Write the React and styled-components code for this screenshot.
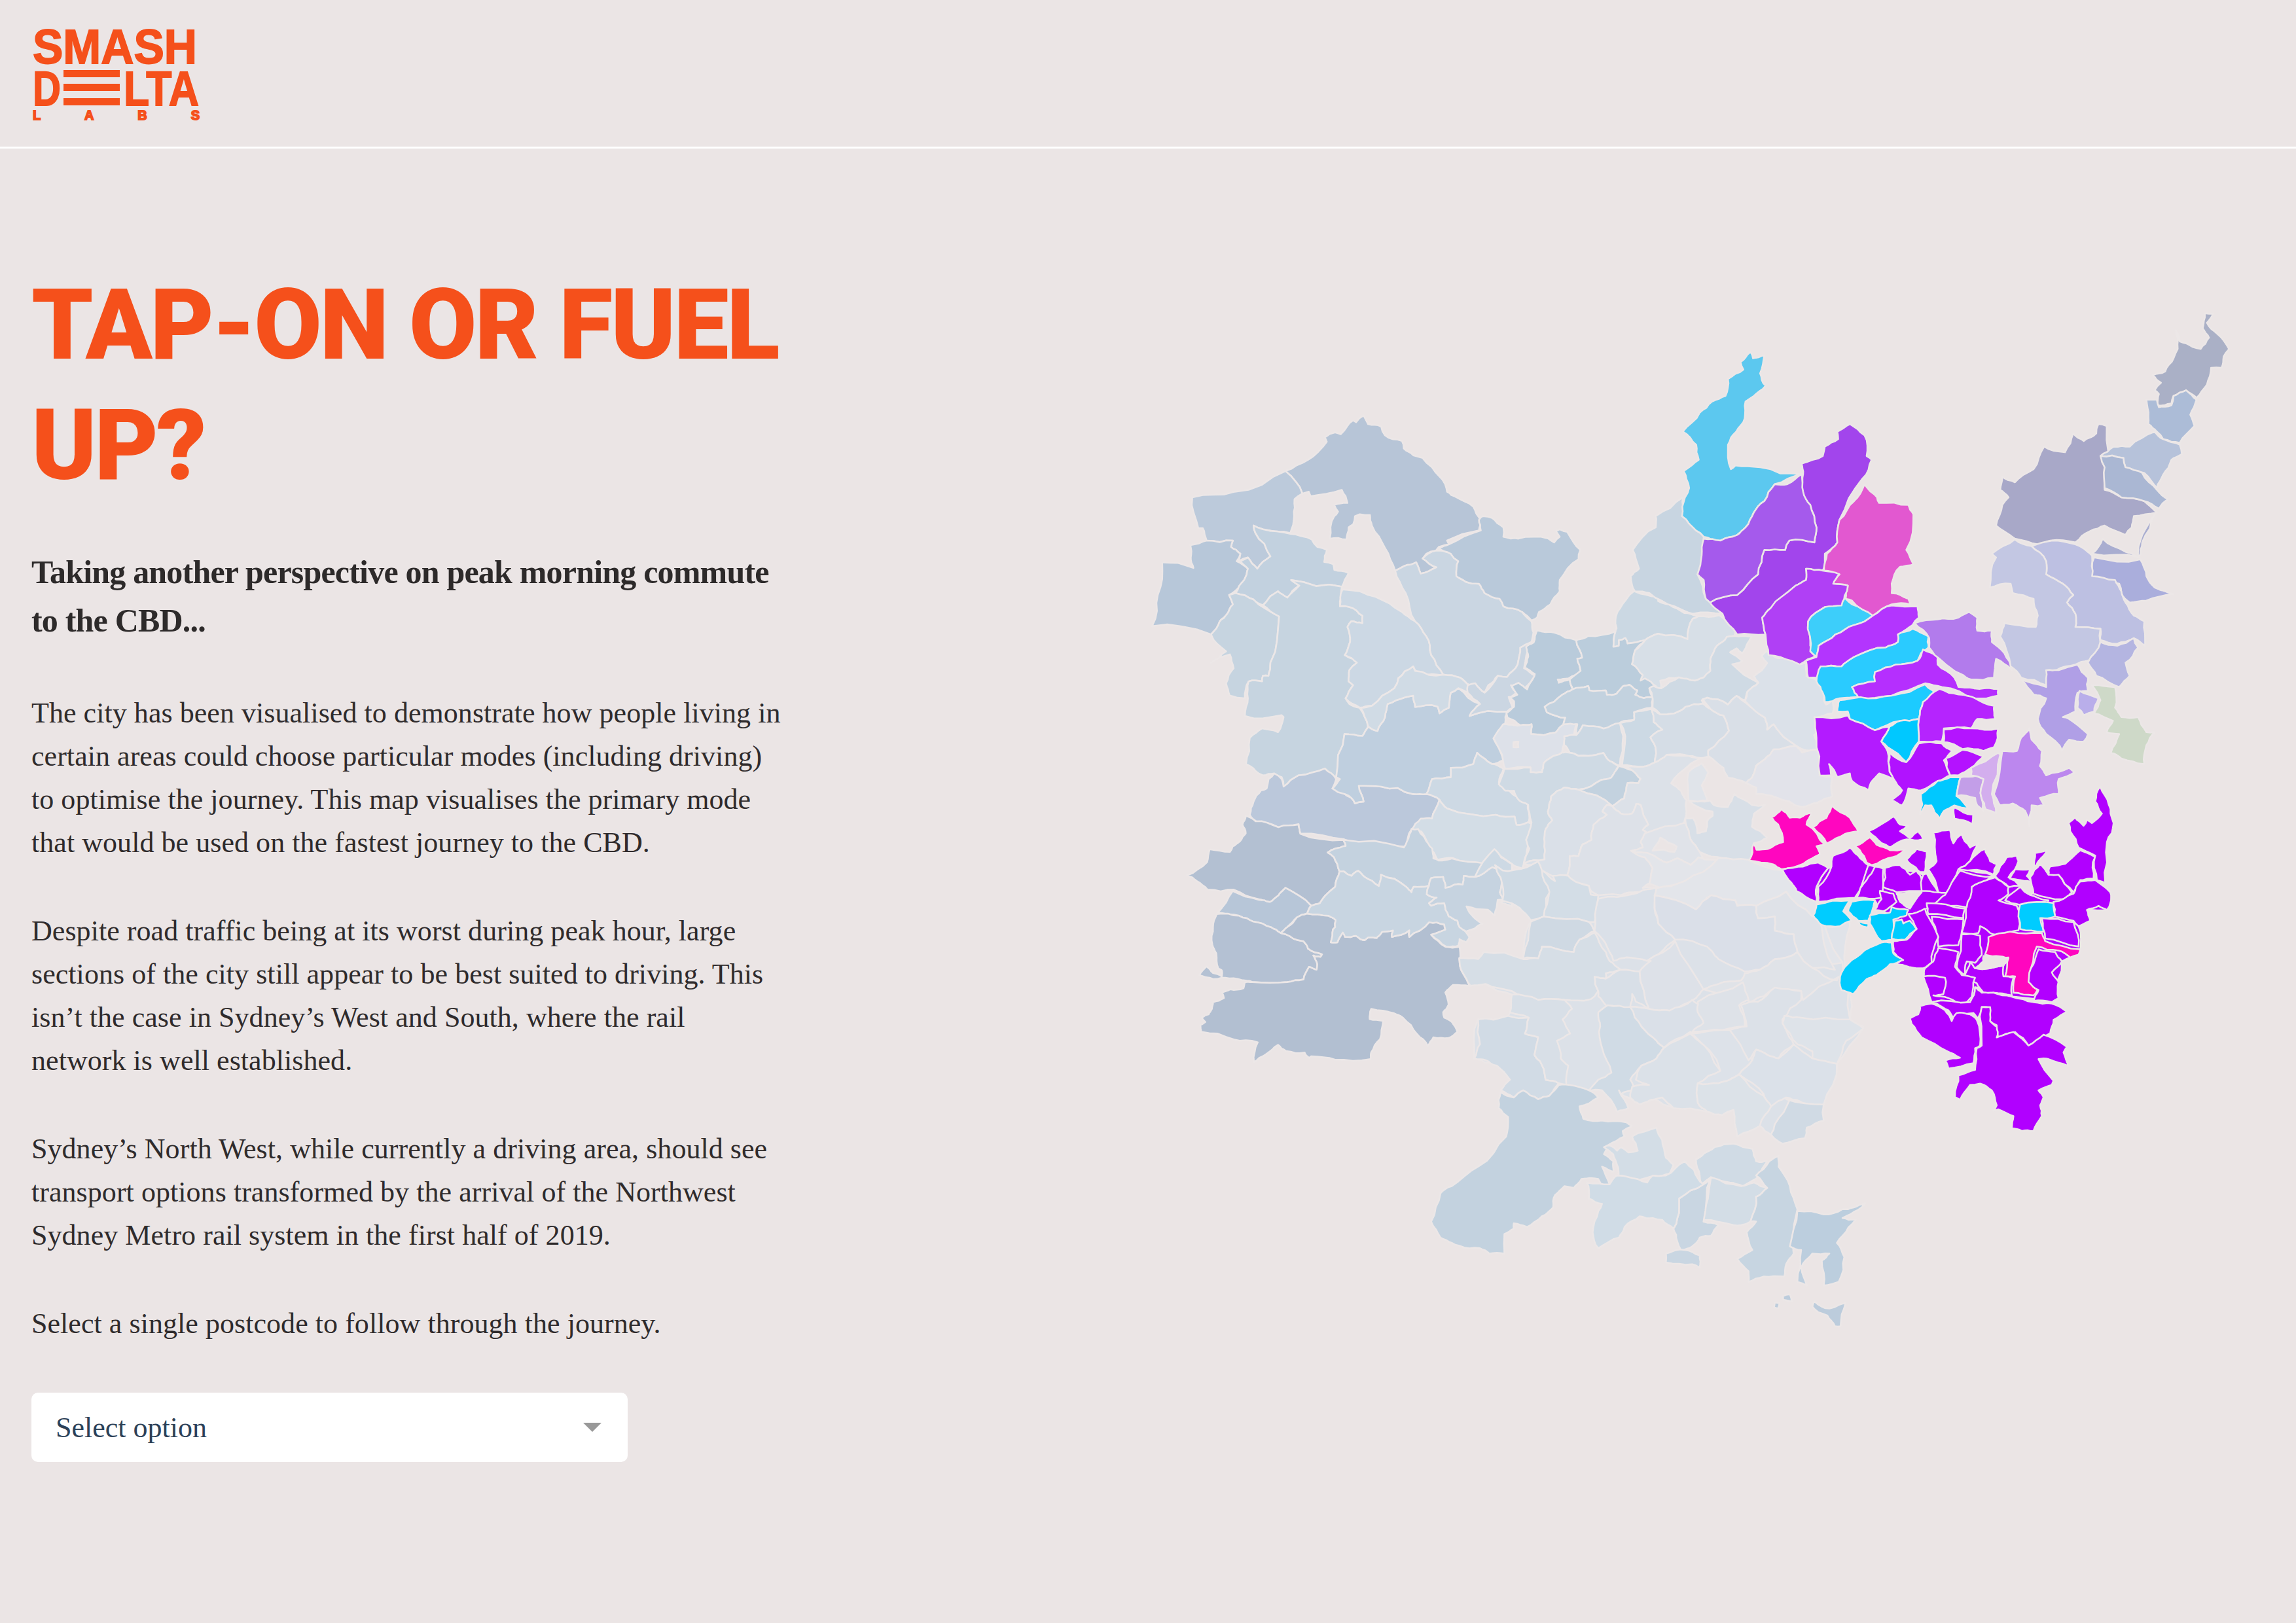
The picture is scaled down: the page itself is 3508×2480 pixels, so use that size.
import React from 'react'
import styled, {createGlobalStyle} from 'styled-components'

const GlobalStyle = createGlobalStyle`
    html, body {
        margin: 0;
        padding: 0;
        background: #ebe5e5;
    }
`
const Page = styled.div`
    width: 3508px;
    height: 2480px;
    overflow: hidden;
    background: #ebe5e5;
    color: #2f2b2c;
    font-family: "Liberation Serif", serif;
`
const Header = styled.header`
    height: 224px;
    padding: 30px 0 0 46px;
    box-sizing: border-box;
    box-shadow: 0 3px 0 #fff;
`
const Logo = styled.svg`
    display: block;
    width: 270px;
    height: 170px;
    overflow: visible;
    fill: #f5501b;
    text {
        font-family: "Liberation Sans", sans-serif;
        font-weight: 700;
        stroke: #f5501b;
        stroke-width: 1.8px;
    }
`
const Main = styled.main`
    display: flex;
    align-items: flex-start;
    padding: 3px 0 0 48px;
`
const Intro = styled.section`
    width: 1170px;
    flex: none;
    padding-top: 178px;
`
const Title = styled.h1`
    margin: 0;
    font-family: Roboto, sans-serif;
    font-weight: 900;
    font-size: 150px;
    line-height: 184px;
    letter-spacing: -3.2px;
    color: #f5501b;
`
const Lead = styled.h2`
    margin: 64px 0 0;
    font-size: 50px;
    line-height: 74px;
    font-weight: 700;
    letter-spacing: -0.8px;
    color: #2d2a2a;
`
const Para = styled.p`
    margin: ${p => p.$first ? '72px' : '69px'} 0 0;
    font-size: 44px;
    line-height: 66px;
    letter-spacing: 0.05px;
`
const Select = styled.div`
    width: 911px;
    height: 106px;
    margin-top: 72px;
    padding: 0 40px 0 37px;
    box-sizing: border-box;
    display: flex;
    align-items: center;
    justify-content: space-between;
    background: #fff;
    border-radius: 10px;
    font-size: 44px;
    color: #2c4158;
`
const Caret = styled.span`
    width: 0;
    height: 0;
    border-left: 14px solid transparent;
    border-right: 14px solid transparent;
    border-top: 14px solid #999;
`
const MapCanvas = styled.svg`
    flex: none;
    display: block;
    width: 1750px;
    height: 1650px;
    margin: 223px 0 0 482px;
`
const Region = styled.path`
    stroke: #ece7e7;
    stroke-width: 2.6px;
    stroke-linejoin: round;
    vector-effect: non-scaling-stroke;
`

// outer suburbs west of the city
const west = [
    ['#b7c5d7', '460,470 520,440 570,392 565,380 592,367 607,372 640,335 648,340 668,322 680,345 715,352 725,375 770,390 775,410 800,428 825,435 850,460 885,505 890,525 915,540 960,565 980,600 975,628 890,655 895,665 868,672 860,682 835,690 825,703 862,726 820,743 808,713 778,722 752,735 725,675 690,615 685,587 658,585 645,590 640,612 628,620 622,652 600,648 578,650 590,590 600,578 590,560 625,555 610,520 527,537 522,525 505,530'],
    ['#bccadb', '212,540 325,525 460,470 505,530 484,545 483,590 473,635 400,625 375,615 380,635 420,697 385,730 360,700 335,710 340,690 315,672 320,655 250,655 240,622 228,622'],
    ['#b7c7d9', '207,667 250,655 320,655 315,672 340,690 330,710 360,730 350,760 325,790 310,800 320,825 305,850 285,870 262,905 105,883 120,800 132,713 215,728 208,700'],
    ['#c2d1df', '375,615 400,625 473,637 530,652 545,672 570,680 563,712 587,718 590,733 628,742 610,778 475,760 497,775 465,807 440,790 420,803 400,827 375,812 327,795 350,760 360,730 340,710 360,700 385,730 420,697 380,635'],
    ['#c6d4e0', '327,795 375,812 443,857 420,980 415,1015 400,1015 398,1030 362,1030 352,1075 312,1068 302,1035 322,995 312,958 262,980 302,950 262,905 285,870 305,850 320,825 310,800'],
    ['#c6d4e0', '475,760 610,778 605,830 630,832 665,855 665,875 635,870 625,885 632,925 618,960 640,970 650,980 630,1000 628,1030 640,1040 620,1075 630,1090 657,1100 680,1150 665,1175 617,1170 595,1285 565,1262 495,1280 455,1310 450,1285 430,1275 400,1280 365,1255 355,1250 365,1180 398,1155 440,1165 455,1125 450,1120 352,1122 360,1075 362,1030 398,1030 400,1015 415,1015 420,980 443,857 400,827 420,803 440,790 465,807 497,775'],
    ['#ccd8e4', '612,785 700,805 770,845 805,870 835,910 848,960 880,1012 840,1012 820,1010 805,1000 800,990 760,1022 750,1048 690,1095 658,1100 620,1075 640,1040 628,1030 630,1000 650,980 618,960 632,925 625,885 635,870 665,875 665,855 630,832 605,830'],
    ['#cad6e2', '752,735 778,722 808,713 820,743 862,726 825,703 840,690 860,682 900,690 920,710 915,750 940,765 975,770 990,795 1030,810 1040,830 1090,845 1115,870 1120,900 1115,925 1085,940 1078,985 1050,1018 1025,1015 1000,1040 990,1060 965,1035 950,1040 925,1020 880,1012 848,960 835,910 805,870 780,795'],
    ['#b9c9da', '895,665 980,628 975,600 985,590 1010,595 1040,620 1040,645 1080,650 1160,650 1175,660 1190,645 1180,630 1190,625 1210,632 1245,680 1240,705 1190,760 1190,790 1165,825 1135,845 1130,860 1115,868 1090,845 1040,830 1030,810 990,795 975,770 940,765 915,750 920,710 900,690 868,675'],
    ['#bbc8db', '415,1290 430,1275 450,1290 455,1310 495,1280 565,1262 595,1290 585,1315 635,1340 645,1355 668,1350 655,1308 715,1310 800,1330 835,1330 870,1345 850,1395 820,1425 795,1425 780,1470 615,1450 500,1435 495,1410 440,1418 385,1405 365,1385 375,1350 395,1320 410,1315'],
    ['#bfcfdf', '617,1170 665,1175 680,1150 705,1162 725,1125 732,1090 755,1080 800,1068 805,1098 865,1097 870,1115 895,1100 900,1060 920,1048 978,1090 950,1122 1050,1110 1045,1140 1015,1185 1035,1225 1040,1240 1010,1250 970,1220 960,1250 900,1260 900,1285 850,1290 835,1330 800,1330 715,1310 655,1308 668,1350 645,1355 635,1340 600,1325 585,1315 605,1290 595,1285'],
    ['#d0dbe5', '660,1100 690,1095 750,1048 760,1022 800,990 805,1002 880,1012 925,1020 950,1040 945,1060 920,1048 900,1060 895,1100 870,1115 865,1097 805,1098 800,1068 755,1080 732,1090 725,1125 705,1162 680,1150'],
    ['#cbd6e2', '945,1040 965,1035 990,1060 1025,1015 1050,1018 1078,985 1085,940 1115,925 1095,995 1125,1015 1095,1050 1060,1040 1075,1060 1055,1075 1065,1100 1050,1110 950,1122 978,1090 945,1060'],
    ['#cdd9e4', '835,1330 850,1290 900,1285 900,1260 960,1250 970,1220 1010,1250 1040,1262 1028,1300 1080,1340 1105,1355 1108,1405 1075,1412 1070,1390 1020,1385 890,1368 870,1345'],
    ['#d3dde6', '890,1368 1020,1385 1070,1390 1075,1412 1105,1405 1120,1410 1105,1470 1095,1510 1090,1528 1018,1478 985,1515 905,1500 865,1505 850,1480 822,1430 795,1425 820,1395 850,1395 870,1345'],
]

// the far south west corner
const southWest = [
    ['#b3c0d2', '340,-40 385,-15 490,12 582,0 590,42 788,70 798,98 750,110 715,128 745,150 770,215 750,285 705,325 680,360 640,372 522,290 490,325 450,355 400,342 285,298 165,298 115,258 72,232 163,172 175,113 268,125 280,100 315,75 340,40 325,0'],
    ['#b7c6d8', '280,305 400,345 450,355 490,325 522,290 640,372 620,408 575,425 530,470 500,497 455,470 375,445 310,418 212,403'],
    ['#b4c1d3', '207,410 310,418 375,445 455,470 500,497 580,530 605,535 625,568 690,595 682,607 650,600 668,640 665,665 630,652 605,710 530,722 370,722 340,715 265,705 190,708 128,690 160,650 190,680 230,697 230,668 215,660 205,590 187,550 190,470'],
    ['#b2bfd1', '622,408 720,418 752,437 750,470 740,480 730,540 760,540 785,495 795,515 845,510 865,525 885,530 900,518 940,520 965,492 1015,485 1010,515 1090,485 1090,515 1180,448 1250,458 1255,482 1190,505 1255,560 1320,560 1320,620 1365,740 1290,735 1255,770 1270,825 1245,860 1250,885 1285,905 1310,950 1270,978 1200,975 1175,1015 1125,960 1060,885 1020,865 915,845 908,892 970,900 955,985 915,1045 912,1075 750,1078 640,1062 630,1070 610,1045 525,1038 488,1010 430,1055 378,1090 395,998 285,985 135,950 132,920 155,905 138,885 170,870 185,845 190,815 240,795 232,770 270,755 330,750 335,725 370,722 530,722 605,710 630,652 665,665 668,640 650,600 682,607 690,595 625,568 605,535 580,530 500,497 530,470 575,425'],
    ['#c4d2df', '788,70 1065,105 1090,45 1100,20 1130,20 1160,60 1195,110 1200,155 1225,165 1285,155 1430,178 1390,240 1340,235 1335,275 1255,290 1245,240 1190,245 1180,280 1110,285 1100,310 1075,285 960,230 950,282 885,240 855,212 825,235 790,215 770,215 745,150 715,128 750,110 798,98'],
    ['#c8d5e1', '770,215 790,215 825,235 855,212 885,240 950,282 960,230 1075,285 1100,310 1110,285 1180,280 1170,320 1215,335 1180,360 1190,372 1250,360 1270,420 1310,440 1320,470 1365,515 1350,540 1320,525 1315,555 1260,560 1190,505 1255,482 1250,458 1180,448 1090,515 1090,485 1010,515 1015,485 965,492 940,520 900,518 885,530 865,525 845,510 795,515 785,495 760,540 730,540 740,480 750,470 752,437 720,418 622,408 640,372 680,360 705,325 750,285'],
    ['#c6d3e0', '1390,240 1470,195 1510,210 1520,240 1505,310 1520,345 1495,345 1480,415 1450,390 1352,375 1385,425 1425,455 1350,490 1320,470 1310,440 1270,420 1250,360 1190,372 1180,360 1215,335 1170,320 1180,280 1190,245 1245,240 1255,290 1335,275 1340,235'],
    ['#cdd9e4', '1480,112 1510,150 1560,180 1560,375 1510,355 1520,345 1505,310 1520,240 1510,210 1470,195 1390,240'],
]

// middle band, around the rivers
const middle = [
    ['#cbd8e3', '650,70 760,95 760,115 810,130 880,170 945,185 920,195 895,290 760,265 700,295 620,310 610,285 580,295 580,320 555,325 570,240 565,200 585,150'],
    ['#d7dfe7', '945,185 1040,180 1115,240 1110,275 1075,280 1030,320 1000,380 1000,435 970,465 930,480 855,465 770,480 775,515 740,505 680,480 690,455 640,405 655,340 700,295 760,265 895,290 920,195'],
    ['#b9cbdb', '205,250 285,260 385,295 412,375 390,380 405,435 350,470 300,475 305,490 355,475 368,520 320,545 240,600 250,625 335,650 325,690 290,718 178,725 180,680 130,685 70,650 65,630 100,600 100,575 75,555 115,545 90,505 120,490 160,520 190,465 195,450 150,420 165,370 155,325 190,305'],
    ['#bbcddc', '385,295 440,275 565,255 555,325 580,320 580,295 610,285 620,310 700,295 655,340 640,405 690,455 680,480 700,470 750,505 720,515 735,555 695,560 655,545 665,525 630,500 600,505 570,540 525,545 520,525 445,525 440,505 370,520 355,475 405,435 390,380 412,375'],
    ['#c3d2df', '240,600 320,545 368,520 440,505 445,525 520,525 525,545 570,540 600,505 630,500 665,525 655,545 695,560 735,555 730,605 650,625 650,660 590,670 510,700 415,685 385,730 390,680 325,685 335,650 250,625'],
    ['#dde1e9', '5,745 50,680 100,685 130,685 180,680 178,725 290,718 330,680 385,680 375,730 330,735 320,810 265,835 235,860 228,900 175,900 175,878 60,885 45,820 30,790'],
    ['#ccd8e3', '330,775 355,810 440,825 510,812 540,850 585,870 600,735 585,675 510,700 415,685 385,730 330,735'],
    ['#ccd9e4', '585,675 650,660 650,625 730,610 740,670 780,705 725,740 750,800 745,855 690,875 595,868 610,735'],
    ['#cfdae4', '55,885 175,878 175,900 228,900 235,860 265,835 320,810 350,810 440,825 510,812 540,850 580,870 545,925 500,935 395,980 330,970 270,1010 255,1080 275,1120 245,1160 240,1220 240,1300 145,1320 170,1250 155,1210 180,1130 165,1050 115,1020 100,985 60,985 30,955'],
    ['#c3d2df', '395,980 500,935 545,925 580,872 640,890 680,930 670,950 620,950 605,1020 550,1055'],
    ['#dae0e8', '395,980 550,1055 525,1050 505,1080 525,1095 465,1140 455,1210 415,1230 395,1285 355,1285 345,1370 300,1375 280,1400 230,1380 220,1330 145,1320 240,1300 240,1220 245,1160 275,1120 255,1080 270,1010 330,970'],
    ['#d5dde6', '730,610 770,635 835,630 885,600 965,585 1000,610 1060,640 1085,710 990,800 995,830 955,835 880,820 800,820 745,855 750,800 725,740 780,705 740,670'],
    ['#cfdae4', '775,515 855,465 930,480 970,465 1000,435 1000,380 1030,320 1075,280 1110,275 1190,280 1165,320 1145,355 1120,332 1090,350 1145,390 1100,405 1220,490 1170,530 1160,570 1120,550 1080,590 985,558 960,570 965,585 885,600 835,630 770,635 735,605 735,560 720,515 740,505'],
    ['#d9dfe7', '965,565 985,558 1080,590 1120,550 1160,580 1250,650 1260,705 1290,680 1320,720 1395,780 1290,795 1250,840 1210,870 1190,925 1165,950 1080,925 1060,880 990,825 990,800 1085,710 1060,640 1000,610'],
    ['#dbe1e9', '1160,575 1170,530 1220,490 1200,460 1260,400 1235,370 1255,345 1300,375 1350,372 1415,405 1440,400 1440,460 1490,480 1530,515 1520,570 1530,590 1560,570 1560,630 1480,650 1495,720 1475,730 1500,800 1440,800 1395,780 1320,720 1290,680 1260,705 1250,650'],
    ['#e2e3ea', '1290,795 1395,780 1420,810 1500,800 1530,815 1550,880 1500,915 1560,920 1560,1010 1510,1030 1490,1040 1420,1060 1300,1015 1210,1000 1210,970 1160,950 1190,925 1210,870 1250,840'],
    ['#dce1e8', '585,870 690,875 745,855 800,820 880,825 955,835 900,870 820,950 865,985 890,1030 890,1080 880,1130 820,1170 770,1190 710,1180 690,1165 715,1140 680,1050 660,1045 640,1090 590,1090 550,1055 605,1020 620,950 670,950 680,930 640,890'],
    ['#d8dfe7', '900,1030 1000,1030 1015,1050 1080,1060 1110,1000 1190,1050 1250,1050 1200,1090 1190,1150 1260,1200 1200,1225 1180,1305 1060,1295 950,1265 910,1210 885,1110 920,1110 940,1180 980,1170 985,1125 1010,1100 1010,1080'],
    ['#e0e4ea', '900,900 960,860 990,900 960,960 985,1030 900,1030'],
    ['#dde1e8', '525,1050 550,1055 590,1090 640,1090 660,1045 680,1050 715,1140 690,1165 710,1180 680,1220 690,1245 640,1260 700,1290 735,1340 720,1410 690,1430 770,1430 765,1465 650,1450 570,1470 480,1480 450,1440 440,1420 375,1410 345,1370 355,1285 395,1285 415,1230 455,1210 465,1140 525,1095 505,1080'],
    ['#e0e3e9', '700,1180 885,1130 910,1210 950,1265 970,1300 945,1300 910,1325 850,1295 800,1315 735,1280 640,1260 690,1245 680,1220'],
    ['#ebe5e5', '770,1200 845,1240 835,1265 735,1260'],
    ['#e3e5ea', '635,1260 735,1280 800,1315 850,1295 910,1325 945,1290 975,1300 1175,1305 1320,1345 1385,1430 1480,1495 1400,1500 1200,1500 770,1465 770,1430 720,1410 735,1340 700,1290'],
    ['#ebe5e5', '97,762 120,760 120,785 97,785'],
]

// pale suburbs under the coloured ones, south of the harbour
const harbourSouth = [
    ['#e3e5ea', '330,400 435,432 540,550 530,600 500,600 445,665 420,660 360,600 330,570 360,470'],
    ['#d9e0e7', '445,665 500,610 535,610 565,640 560,680 530,710 490,735 480,670'],
    ['#e0e3e9', '480,735 530,710 565,640 610,640 620,585 640,640 625,790 615,800 600,830 500,850 490,800 500,765'],
    ['#e2e4e9', '615,860 640,890 640,980 680,1010 640,1040 600,1145 530,1130 530,1100 470,1065 445,985 500,880 500,850'],
]

// south of Parramatta river down to the national park
const south = [
    // land under the suburbs, so the traced pieces leave no holes
    ['#dce1e8', '400,487 570,490 590,385 620,240 770,310 920,290 1170,210 1350,330 1420,500 1440,660 1475,685 1405,785 1370,900 1280,885 1230,985 1200,960 1140,990 1130,915 1060,920 970,910 920,885 880,900 850,880 830,870 850,910 820,920 780,860 745,860 665,845 640,875 610,885 510,860 535,830 500,790 440,770 450,660 530,650 535,640 540,590 470,560 430,565 410,530'],
    ['#cfdae4', '495,225 515,240 567,235 610,215 620,240 650,270 625,370 590,380 560,345 515,325 510,260'],
    ['#d3dde6', '620,240 655,270 650,255 690,255 700,265 745,283 750,308 770,310 760,385 745,385 625,370 640,300'],
    ['#cfd9e3', '590,385 625,370 745,385 760,410 720,435 705,470 620,455 610,488 570,488'],
    ['#d6dee6', '400,487 450,490 465,470 570,490 610,488 620,455 705,470 720,435 760,415 790,470 800,495 830,520 790,530 790,545 760,540 770,580 760,595 750,603 680,605 610,605 540,580 470,560 430,565 410,530'],
    ['#dae0e8', '770,320 820,315 890,295 930,290 935,310 920,330 930,390 975,435 945,462 900,495 845,485 810,495 800,470 770,420 760,410'],
    ['#e3e5ea', '1170,210 1260,240 1350,330 1420,500 1340,515 1340,370 1270,300 1190,340 1140,340 1135,325 1070,310 1030,350 920,310 925,290 1000,270 1090,205'],
    ['#dfe2e8', '1190,340 1270,300 1340,370 1350,360 1400,520 1340,515 1300,470 1290,420 1240,410 1240,370 1195,375'],
    ['#dadfe8', '920,310 1030,350 1070,310 1135,325 1140,340 1190,340 1195,375 1240,370 1240,410 1290,420 1300,470 1240,490 1200,520 1160,525 1090,490 1080,480 1060,455 975,435 930,390'],
    ['#dde1e8', '900,495 975,440 1050,575 1030,600 960,635 905,630 880,525 910,495'],
    ['#e0e3e8', '1050,575 1090,560 1150,550 1160,530 1200,520 1240,490 1300,470 1340,515 1405,550 1410,540 1315,605 1310,580 1240,572 1210,595 1175,610'],
    ['#d8dfe7', '770,595 790,620 855,625 860,588 870,610 905,630 880,525 830,520 790,545 760,540 770,580'],
    ['#d1dbe5', '450,660 530,650 585,655 575,700 610,710 600,760 625,800 630,830 665,840 640,875 610,885 570,860 545,880 510,860 535,830 500,790 470,775 440,770 455,730'],
    ['#d8dfe7', '540,590 610,605 680,605 700,630 675,660 695,700 660,720 670,770 690,790 685,845 665,840 630,830 625,800 600,760 610,710 575,700 585,655 535,640'],
    ['#d0dbe5', '770,640 795,620 855,625 905,630 885,680 925,720 945,740 925,770 885,790 855,830 870,860 830,870 825,860 850,910 820,920 780,860 745,860 770,830 805,810 780,740 775,680'],
    ['#dae0e8', '855,625 905,630 960,635 1020,605 1045,625 1055,690 1020,700 1015,695 945,740 925,720 885,680'],
    ['#dbe1e8', '945,740 1015,700 1030,715 1095,805 1035,840 1035,895 1060,920 970,910 940,880 920,885 880,900 855,880 860,850 905,845 870,830 885,790 925,770'],
    ['#dde2e9', '1020,700 1100,690 1120,690 1180,775 1145,815 1120,830 1090,840 1075,880 1040,885 1035,840 1095,805'],
    ['#dee2e8', '1035,610 1155,555 1170,605 1145,620 1160,680 1100,690 1020,695 1050,670 1035,640'],
    ['#dce1e8', '1120,690 1165,680 1150,620 1195,610 1240,570 1310,580 1310,605 1260,660 1270,690 1290,730 1250,770 1220,760 1190,745 1170,775'],
    ['#dee3e9', '1265,650 1310,655 1440,660 1475,685 1430,720 1405,785 1340,770 1340,750 1300,730 1260,670'],
    ['#dbe1e9', '1145,815 1180,775 1190,745 1220,760 1250,770 1290,730 1340,770 1405,785 1370,900 1340,905 1305,890 1270,880 1230,905 1210,870'],
    ['#dce2e8', '1035,840 1090,840 1120,830 1145,815 1210,875 1230,905 1200,960 1140,990 1130,915 1100,930 1060,920 1035,895'],
    ['#d0dae4', '1270,885 1370,900 1370,945 1325,965 1320,995 1260,1010 1230,985 1240,955 1280,885'],
    ['#c3d2df', '510,865 545,880 570,860 610,885 640,875 665,845 695,845 745,860 770,880 720,905 730,940 780,945 845,950 860,960 835,975 840,990 795,1015 785,1040 810,1060 810,1090 780,1075 790,1100 800,1125 780,1130 770,1110 725,1110 705,1135 680,1130 655,1155 650,1190 620,1215 580,1245 545,1235 545,1250 520,1265 520,1320 480,1320 455,1305 400,1298 380,1290 350,1275 325,1230 350,1150 380,1130 450,1075 525,990 530,935 505,910'],
    ['#d3dde6', '860,990 925,965 940,1000 950,1050 970,1070 960,1095 920,1100 875,1115 825,1105 820,1070 810,1040 785,1020 800,1015 820,1030 830,1020 850,1035 875,1030'],
    ['#d0dbe5', '1045,1125 1040,1100 1030,1055 1045,1045 1080,1020 1130,1010 1180,1025 1190,1060 1220,1060 1200,1100 1155,1130 1120,1120 1070,1105'],
    ['#d3dde6', '1070,1105 1150,1130 1185,1120 1220,1135 1190,1160 1175,1230 1150,1240 1130,1240 1050,1225'],
    ['#c9d6e2', '1050,1125 1070,1105 1050,1230 1090,1240 1070,1270 1040,1275 1020,1300 990,1310 980,1285 970,1250 985,1190 985,1165'],
    ['#d0dce6', '740,1120 800,1125 820,1100 875,1110 900,1120 915,1100 950,1100 1000,1060 1025,1085 1050,1125 985,1165 985,1190 970,1250 940,1225 915,1220 880,1215 840,1245 825,1275 770,1305 755,1260 770,1200 780,1180 745,1165'],
    ['#c7d5e1', '1225,1060 1250,1045 1250,1075 1280,1130 1300,1195 1285,1280 1290,1320 1270,1350 1265,1385 1210,1385 1170,1400 1170,1370 1140,1335 1180,1310 1165,1260 1190,1230 1175,1230 1190,1160 1220,1135 1190,1100'],
    ['#bccede', '1300,1200 1370,1210 1420,1195 1450,1190 1480,1178 1440,1210 1420,1220 1455,1225 1420,1270 1405,1290 1425,1330 1410,1400 1370,1410 1365,1340 1385,1320 1340,1320 1310,1360 1325,1410 1300,1400 1310,1310 1280,1300'],
    ['#c9d6e2', '950,1320 1000,1310 1040,1325 1040,1360 1020,1350 950,1345'],
    ['#bcccdc', '1262,1440 1280,1435 1285,1455 1262,1450'],
    ['#bcccdc', '1240,1458 1252,1460 1248,1475 1238,1472'],
    ['#bcccdc', '1345,1455 1365,1470 1385,1475 1410,1465 1428,1460 1415,1525 1400,1525 1380,1495 1355,1485 1340,1470'],
]

// north shore, the coloured band and the northern beaches
const north = [
    ['#c8d5e1', '190,540 188,590 205,610 240,645 240,700 225,745 245,810 285,850 215,850 170,830 110,795 75,790 65,750 85,730 70,680 125,620 125,590'],
    ['#5cc8ef', '352,153 358,170 385,162 375,210 388,243 360,270 340,285 338,330 318,365 298,400 305,465 316,455 375,460 475,478 410,505 385,550 360,580 340,620 320,640 280,655 240,645 205,610 188,590 195,540 205,515 192,470 228,440 222,400 190,365 230,315 260,285 292,270 298,225 335,200 328,180'],
    ['#a245ec', '590,345 625,375 630,430 642,440 620,490 565,600 560,660 530,690 525,735 485,730 485,760 460,775 400,835 380,860 388,905 320,905 285,850 255,820 320,800 370,745 385,680 435,680 445,655 505,660 510,620 495,560 475,520 478,478 475,450 525,430 530,405 562,385 560,365'],
    ['#a55aec', '475,478 478,525 495,560 510,620 505,660 445,655 435,680 385,680 370,745 320,800 255,820 245,810 240,760 225,745 235,695 240,650 280,655 320,640 340,620 360,580 385,550 410,505 440,505'],
    ['#e258d0', '625,505 655,540 660,555 730,560 742,585 725,680 742,718 710,725 690,770 690,795 730,810 735,825 690,825 645,855 595,815 580,810 585,775 550,770 565,745 528,735 535,690 560,660 565,600 600,550'],
    ['#b040f5', '485,730 525,735 565,745 550,770 585,775 575,830 530,832 490,870 495,935 510,960 470,985 450,975 395,960 388,905 380,860 400,835 460,775 485,760'],
    ['#3dcefa', '578,808 595,825 645,855 600,880 555,905 515,935 510,965 495,950 490,870 530,832 570,828'],
    ['#b335fe', '690,828 752,830 755,860 740,880 705,905 705,925 675,940 600,965 570,990 520,990 512,1020 490,1020 485,975 510,965 515,935 555,905 600,880 645,855'],
    ['#2acbff', '740,890 778,910 778,940 760,955 752,975 700,985 650,1005 650,1030 595,1045 615,1072 565,1075 530,1085 525,1060 510,1030 520,990 570,990 600,965 675,940 705,925 705,905'],
    ['#b52ffe', '765,945 800,965 800,985 840,1020 850,1045 900,1050 945,1050 945,1068 890,1075 810,1045 770,1035 690,1068 610,1072 595,1045 650,1030 650,1005 700,985 752,975'],
    ['#1ccbff', '770,1038 802,1070 765,1085 755,1130 710,1135 650,1160 590,1130 585,1110 560,1110 565,1080 615,1072 690,1068'],
    ['#b524fe', '805,1050 850,1065 890,1075 935,1095 938,1130 895,1130 880,1155 815,1155 810,1190 755,1190 755,1130 765,1085'],
    ['#00c8ff', '755,1130 755,1190 725,1245 680,1205 665,1190 685,1150 710,1135'],
    ['#b31bff', '505,1125 585,1120 590,1130 650,1160 685,1150 665,1190 680,1215 685,1270 695,1290 660,1275 640,1300 635,1320 595,1295 590,1275 560,1285 540,1250 545,1280 518,1280 510,1180'],
    ['#b414ff', '815,1158 880,1155 945,1155 935,1205 910,1215 860,1210 815,1190'],
    ['#b112ff', '685,1220 725,1245 755,1195 810,1195 835,1215 815,1240 830,1280 800,1295 760,1320 730,1315 715,1360 690,1345 715,1320 695,1290 685,1270'],
    ['#b412ff', '820,1235 860,1212 910,1230 880,1260 850,1280 830,1280'],
    ['#00c8ff', '760,1330 800,1295 830,1285 855,1285 845,1335 875,1370 840,1360 815,1375 805,1395 785,1360 770,1360 758,1385'],
    ['#b100ff', '840,1365 885,1385 883,1410 840,1395'],
    ['#c39ee8', '855,1285 895,1280 910,1290 905,1340 910,1375 895,1360 890,1340 845,1335'],
    ['#d3aeee', '880,1260 945,1220 950,1225 930,1330 940,1380 915,1370 905,1340 910,1290 880,1280'],
    ['#bc87ee', '955,1215 990,1215 1000,1180 1020,1155 1025,1185 1050,1215 1045,1255 1060,1280 1115,1260 1128,1272 1090,1290 1090,1330 1045,1340 1055,1360 1025,1360 1020,1415 1010,1375 980,1355 950,1360 935,1330'],
    ['#b27bec', '745,875 800,865 850,860 875,845 895,860 895,895 930,895 930,925 960,955 978,1000 940,970 935,1020 880,1025 855,1010 810,975 780,940 780,915'],
    ['#a8a8c8', '1185,345 1205,350 1200,500 1200,520 1240,540 1295,550 1325,580 1270,590 1265,620 1250,640 1200,615 1165,630 1130,660 1070,655 1040,665 985,650 940,615 955,560 970,540 950,520 955,485 985,500 1030,465 1055,405 1105,420 1125,370 1150,390 1180,370'],
    ['#aab0c6', '1370,95 1380,125 1395,130 1430,145 1450,115 1435,90 1440,50 1460,50 1445,75 1470,105 1498,145 1485,165 1480,195 1455,195 1445,240 1420,275 1395,255 1365,270 1360,290 1325,295 1330,265 1320,255 1335,235 1315,215 1345,205 1365,170 1375,145'],
    ['#acbcd7', '1300,280 1325,280 1330,300 1360,295 1365,270 1395,255 1420,280 1405,320 1415,350 1380,395 1340,385 1325,365 1305,345 1305,325'],
    ['#b6c2da', '1222,405 1260,405 1320,365 1340,385 1380,400 1385,425 1360,440 1340,480 1325,515 1295,475 1250,460 1245,435 1190,430'],
    ['#aab7d3', '1190,430 1245,435 1250,460 1290,475 1325,520 1352,545 1330,570 1295,550 1240,540 1200,515 1200,460'],
    ['#a9add0', '1170,690 1195,650 1250,685 1280,700 1290,640 1320,585 1290,660 1282,700'],
    ['#aaaedc', '1175,700 1285,705 1300,750 1320,780 1345,790 1365,798 1300,815 1260,820 1240,795 1235,770 1170,750'],
    ['#bdc0e2', '1025,670 1075,655 1130,665 1170,695 1170,750 1225,760 1240,790 1250,820 1270,855 1295,870 1297,935 1270,915 1230,930 1190,920 1190,890 1130,885 1130,850 1110,820 1125,800 1100,770 1060,745 1060,710'],
    ['#c3c7e3', '985,652 1025,670 1060,710 1060,745 1100,770 1125,800 1110,820 1130,850 1130,885 1190,890 1180,960 1160,975 1130,985 1085,1000 1060,1040 1000,1020 975,990 950,910 960,875 1035,885 1040,855 1030,810 980,795 975,770 925,780 940,700 930,690'],
    ['#b4b5e1', '1190,925 1230,935 1270,915 1280,940 1250,980 1260,1015 1235,1045 1180,1015 1160,980'],
    ['#b09fe6', '1060,1000 1090,1000 1135,985 1160,1020 1160,1055 1135,1060 1130,1110 1100,1125 1115,1130 1160,1170 1150,1190 1115,1185 1098,1215 1060,1170 1040,1130 1060,1075 1030,1065 1000,1025 1060,1045'],
    ['#b9aeea', '1140,1055 1185,1075 1175,1110 1150,1120 1135,1100'],
    ['#ced9c8', '1170,1040 1225,1045 1225,1100 1240,1125 1280,1125 1300,1165 1320,1165 1300,1200 1295,1250 1240,1235 1215,1220 1235,1170 1205,1165 1220,1135 1175,1115 1190,1080'],
]

const PINK = '#ff06bf'
const PURPLE = '#b100ff'
const CYAN = '#00ccff'
const GROUND = '#ebe5e5'

// eastern and inner south suburbs
const east = [
    // purple under the suburbs closes the gaps between the traced pieces
    [PURPLE, '575,425 700,415 745,425 860,450 905,515 965,430 1075,455 1115,495 1150,490 1180,525 1260,445 1310,515 1375,470 1420,515 1410,580 1350,580 1325,640 1330,730 1275,770 1265,905 1245,925 1015,865 1000,920 885,920 860,825 865,795 775,780 770,600 735,580 715,545 655,535 545,550 540,495'],
    [GROUND, '780,520 855,515 820,575 790,550'],
    [PINK, '352,335 360,358 395,355 440,330 425,265 405,240 435,208 460,240 490,240 525,222 510,265 565,340 540,345 550,375 500,410 435,430 410,412 338,398'],
    [PINK, '530,275 570,240 585,195 640,240 665,290 625,300 570,335'],
    [PINK, '655,345 700,312 720,340 760,360 805,358 770,385 705,415 690,405 670,360'],
    [PURPLE, '438,432 500,420 545,405 575,425 540,495 540,550 480,510 465,480'],
    [PURPLE, '590,380 640,350 665,380 695,415 655,535 545,550 545,495 585,420'],
    [PURPLE, '715,420 740,428 735,535 660,535 690,470'],
    [PURPLE, '745,425 790,415 820,450 840,435 855,470 855,510 780,515 760,505 740,495'],
    [PURPLE, '860,450 870,445 905,515 855,510'],
    [PURPLE, '730,510 770,520 780,550 740,585 715,580 735,540'],
    [PURPLE, '810,395 840,355 870,365 865,440 850,440 820,410'],
    [PURPLE, '875,430 900,400 890,295 940,285 950,335 975,300 1000,350 1025,335 1000,400 965,430 935,515 905,515'],
    [PURPLE, '695,290 770,235 790,265 815,270 790,290 820,315 845,290 858,320 810,320 760,350 715,310'],
    [PURPLE, '1000,400 1045,355 1060,400 1080,412 1070,450 965,430'],
    [PURPLE, '1075,455 1110,385 1140,380 1145,400 1115,460 1150,490 1115,495'],
    [PURPLE, '1120,465 1135,430 1180,430 1170,455 1190,480 1150,470'],
    [PURPLE, '1195,370 1230,360 1205,400 1190,425'],
    [PURPLE, '1180,460 1210,410 1235,450 1260,445 1305,515 1280,540 1190,520'],
    [PURPLE, '1240,420 1285,410 1330,360 1375,385 1370,465 1330,470 1310,515 1265,450 1235,450'],
    [PURPLE, '1295,260 1315,240 1340,270 1350,248 1365,260 1395,225 1375,180 1390,125 1415,190 1430,260 1410,330 1405,480 1380,470 1375,380 1325,350 1300,290'],
    [PURPLE, '1330,475 1375,470 1420,515 1420,555 1410,580 1385,565 1350,580 1360,620 1325,640 1310,620 1255,605 1250,550 1310,520'],
    [PURPLE, '1005,495 1050,470 1075,460 1115,495 1115,520 1085,545 1140,565 1145,655 1090,675 1060,665 1030,640 1025,665 975,665 990,550'],
    [PURPLE, '870,575 905,545 925,525 970,435 1075,455 1050,470 1005,495 990,570'],
    [PURPLE, '1105,545 1150,495 1180,525 1235,545 1230,555 1145,560'],
    [CYAN, '1150,560 1250,555 1255,605 1210,610 1220,660 1150,650'],
    [PURPLE, '1215,610 1310,625 1325,715 1225,685'],
    [PINK, '1055,680 1120,660 1215,665 1225,695 1330,725 1325,745 1300,755 1265,730 1200,715 1180,825 1200,855 1205,870 1190,895 1130,885 1135,825 1105,825 1115,755 1045,745'],
    [PURPLE, '1205,725 1255,735 1275,770 1245,810 1265,845 1265,905 1245,920 1190,915 1205,875 1175,845 1190,780'],
    [PURPLE, '1000,770 1015,795 1100,785 1100,825 1130,830 1125,895 1070,885 1040,885 1020,850 980,825'],
    [PURPLE, '975,670 1030,675 1035,745 1015,775 990,770 985,820 960,790'],
    [GROUND, '1040,750 1115,760 1100,785 1015,795 1040,770'],
    [PURPLE, '885,605 980,615 975,660 965,710 905,715 905,680'],
    [PURPLE, '870,555 985,575 980,610 875,595'],
    [PURPLE, '815,595 865,575 875,605 905,680 885,775 860,795 775,780 795,765 770,735 770,695 810,690 840,650'],
    [PURPLE, '905,720 965,735 955,790 975,820 1015,830 1005,900 975,935 935,905 890,895 920,890 925,830 860,825 865,795 890,770'],
    [PURPLE, '1015,865 1035,885 1070,885 1125,900 1190,920 1245,925 1290,955 1250,985 1240,1035 1175,1080 1135,1030 1085,1050 1080,1005 1060,990 1060,940 1035,938 1025,985 1010,960 965,960 955,985 935,950 900,925 885,920 1000,920'],
    [PURPLE, '820,980 845,965 850,935 885,925 925,950 945,990 960,960 1000,965 1020,985 1030,1080 1015,1090 1010,1145 935,1165 925,1135 970,1125 930,1100 855,1050 825,1000'],
    [PURPLE, '1020,1090 1035,1080 1035,938 1060,938 1060,990 1080,1010 1080,1050 1130,1030 1175,1080 1220,1040 1290,1085 1280,1105 1295,1155 1235,1130 1205,1130 1250,1210 1245,1225 1205,1245 1220,1270 1210,1300 1215,1340 1190,1395 1155,1395 1125,1385 1130,1340 1085,1315 1070,1320 1080,1300 1065,1245 1030,1220 1000,1225 970,1280 955,1270 965,1190 1015,1170'],
    [CYAN, '540,560 640,545 620,585 645,620 610,640 555,635 530,600'],
    [CYAN, '645,550 715,545 705,590 695,620 665,620 635,585'],
    [CYAN, '665,622 695,630 695,645 670,635'],
    [CYAN, '700,600 760,590 765,570 815,580 810,600 770,615 765,690 735,695 700,630'],
    [CYAN, '775,620 795,615 800,630 820,620 840,650 805,690 765,685'],
    [CYAN, '735,700 765,700 770,740 800,765 760,780 720,820 690,835 650,890 615,875 610,840 625,790 670,745'],
]

// each list was traced in its own frame, so each gets its own transform
const layers = [
    {transform: 'translate(1700 450) scale(.574)', regions: west},
    {transform: 'translate(1790 1260) scale(.3333)', regions: southWest},
    {transform: 'translate(2280 880) scale(.3333)', regions: middle},
    {transform: 'translate(2500 1150) scale(.51 .4145)', regions: harbourSouth},
    {transform: 'translate(2000 1200) scale(.574 .542)', regions: south},
    {transform: 'translate(2450 450) scale(.638 .574)', regions: north},
    {transform: 'translate(2500 1150) scale(.51 .4145)', regions: east},
]

// wobble an edge by a bend taken from its two ends, so that two regions
// sharing the same edge get the same wobble
const wobble = (a, b, depth) => {
    const len = Math.hypot(b[0] - a[0], b[1] - a[1])
    if (depth === 0 || len < 14) return []
    const [p, q] = a[0] + a[1] < b[0] + b[1] ? [a, b] : [b, a]
    const hash = Math.sin(p[0] * 12.9898 + p[1] * 78.233 + q[0] * 37.719 + q[1] * 4.581) * 43758.5453
    const bend = (hash - Math.floor(hash) - 0.5) * 0.16
    const mid = [
        (a[0] + b[0]) / 2 + (q[1] - p[1]) * bend,
        (a[1] + b[1]) / 2 - (q[0] - p[0]) * bend,
    ]
    return [...wobble(a, mid, depth - 1), mid, ...wobble(mid, b, depth - 1)]
}

const toPath = points => {
    const pts = points.split(' ').map(pair => pair.split(',').map(Number))
    const out = pts.flatMap((pt, i) => [pt, ...wobble(pt, pts[(i + 1) % pts.length], 2)])
    return 'M' + out.map(pt => pt[0].toFixed(1) + ' ' + pt[1].toFixed(1)).join('L') + 'Z'
}

function App() {
    return (
        <Page>
            <GlobalStyle />
            <Header>
                <Logo viewBox="46 30 270 170">
                    <text x="50" y="97" fontSize="74" textLength="251" lengthAdjust="spacingAndGlyphs">SMASH</text>
                    <text x="50" y="161" fontSize="74" textLength="43" lengthAdjust="spacingAndGlyphs">D</text>
                    <rect x="97" y="107" width="86" height="11" />
                    <rect x="97" y="128" width="86" height="11" />
                    <rect x="97" y="150" width="86" height="11" />
                    <text x="189" y="161" fontSize="74" textLength="115" lengthAdjust="spacingAndGlyphs">LTA</text>
                    <text x="50" y="183" fontSize="20" textLength="255" lengthAdjust="spacing">LABS</text>
                </Logo>
            </Header>
            <Main>
                <Intro>
                    <Title>TAP-ON OR FUEL<br />UP?</Title>
                    <Lead>Taking another perspective on peak morning commute<br />to the CBD...</Lead>
                    <Para $first>
                        The city has been visualised to demonstrate how people living in<br />
                        certain areas could choose particular modes (including driving)<br />
                        to optimise the journey. This map visualises the primary mode<br />
                        that would be used on the fastest journey to the CBD.
                    </Para>
                    <Para>
                        Despite road traffic being at its worst during peak hour, large<br />
                        sections of the city still appear to be best suited to driving. This<br />
                        isn’t the case in Sydney’s West and South, where the rail<br />
                        network is well established.
                    </Para>
                    <Para>
                        Sydney’s North West, while currently a driving area, should see<br />
                        transport options transformed by the arrival of the Northwest<br />
                        Sydney Metro rail system in the first half of 2019.
                    </Para>
                    <Para>Select a single postcode to follow through the journey.</Para>
                    <Select>
                        <span>Select option</span>
                        <Caret />
                    </Select>
                </Intro>
                <MapCanvas viewBox="1700 450 1750 1650">
                    {layers.map((layer, i) => (
                        <g key={i} transform={layer.transform}>
                            {layer.regions.map(([fill, points], j) => (
                                <Region key={j} fill={fill} d={toPath(points)} />
                            ))}
                        </g>
                    ))}
                </MapCanvas>
            </Main>
        </Page>
    )
}

export default App
